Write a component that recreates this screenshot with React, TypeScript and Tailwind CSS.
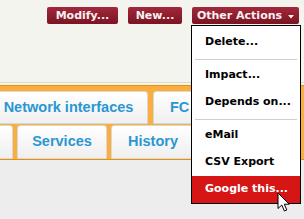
import React from "react";

const btn =
  "h-[17px] flex items-center justify-center rounded-[2px] bg-linear-to-b from-[#a3283b] to-[#7a1424] text-[#f7f0f0] text-[11px] font-bold leading-none font-['DejaVu_Sans',sans-serif]";

const tab =
  "flex items-center justify-center rounded-t-[3px] border border-[#d8d8d8] bg-linear-to-b from-[#ffffff] to-[#efefef] text-[#2a97d2] text-[14.5px] font-bold font-['Liberation_Sans',Arial,sans-serif]";

const item =
  "h-[27px] flex items-center pl-[13px] text-[11px] font-bold text-black font-['DejaVu_Sans',sans-serif]";

export default function App() {
  return (
    <div className="relative w-[304px] h-[219px] overflow-hidden bg-[#ededed]">
      <div className="h-[83px] bg-[#f4f4ef] flex justify-end items-start pt-[7px] pr-[5px] gap-[10px] border-b border-[#dcdcd6]">
        <div className={`${btn} w-[71px]`}>Modify...</div>
        <div className={`${btn} w-[54px]`}>New...</div>
        <div className={`${btn} w-[107px] gap-[6px]`}>
          <span>Other Actions</span>
          <svg width="6" height="4" viewBox="0 0 6 4" className="mt-[2px]">
            <path d="M0 0 L6 0 L3 3.5 Z" fill="#f7f0f0" />
          </svg>
        </div>
      </div>
      <div className="h-[2px] bg-[#f4f4ef]" />
      <div className="border-t border-[#e8900c] border-b bg-[#f9ae3e] pt-[5px] flex flex-col gap-[1px]">
        <div className="flex gap-[5px] h-[33px] -ml-[11px]">
          <div className={`${tab} w-[159px]`}>Network interfaces</div>
          <div className={`${tab} w-[120px] justify-start pl-[16px]`}>FC</div>
        </div>
        <div className="flex gap-[4px] h-[34px] -ml-[10px]">
          <div className={`${tab} w-[23px] rounded-tl-none`} />
          <div className={`${tab} w-[90px]`}>Services</div>
          <div className={`${tab} w-[120px] justify-start pl-[16px]`}>History</div>
        </div>
      </div>

      <div className="absolute left-[191px] top-[25px] w-[110px] bg-white border border-black pt-[3px]">
        <div className={item}>Delete...</div>
        <div className="h-[6px] flex items-center px-[3px]">
          <div className="h-px w-full bg-[#cfcfcf]" />
        </div>
        <div className={item}>Impact...</div>
        <div className={item}>Depends on...</div>
        <div className="h-[6px] flex items-center px-[3px]">
          <div className="h-px w-full bg-[#cfcfcf]" />
        </div>
        <div className={item}>eMail</div>
        <div className={item}>CSV Export</div>
        <div className={`${item} bg-[#d61515] text-white`}>Google this...</div>
      </div>

      <svg
        className="absolute left-[277px] top-[192px]"
        width="14"
        height="21"
        viewBox="0 0 14 21"
      >
        <path
          d="M1 1 L1 16.5 L4.8 13 L7.4 19 L9.8 18 L7.3 12.2 L12.2 12.2 Z"
          fill="white"
          stroke="black"
          strokeWidth="1"
          strokeLinejoin="round"
        />
      </svg>
    </div>
  );
}
